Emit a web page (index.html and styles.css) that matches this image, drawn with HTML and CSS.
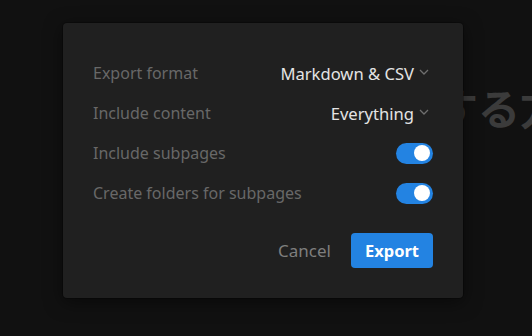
FILE: index.html
```html
<!DOCTYPE html>
<html lang="ja">
<head>
    <meta charset="UTF-8">
    <meta name="viewport" content="width=device-width, initial-scale=1.0">
    <title>Export</title>
    <link rel="stylesheet" href="styles.css">
</head>
<body>

    <div class="page">
        <h1 class="page-title">する方法</h1>
    </div>

    <div class="overlay">
        <div class="dialog">
            <div class="row">
                <span class="label">Export format</span>
                <span class="select">Markdown &amp; CSV
                    <svg class="chevron" width="10" height="6" viewBox="0 0 10 6"><path d="M1 1l4 4 4-4" fill="none" stroke="currentColor" stroke-width="1.3"/></svg>
                </span>
            </div>
            <div class="row">
                <span class="label">Include content</span>
                <span class="select">Everything
                    <svg class="chevron" width="10" height="6" viewBox="0 0 10 6"><path d="M1 1l4 4 4-4" fill="none" stroke="currentColor" stroke-width="1.3"/></svg>
                </span>
            </div>
            <div class="row">
                <span class="label">Include subpages</span>
                <span class="toggle on"><span class="knob"></span></span>
            </div>
            <div class="row">
                <span class="label">Create folders for subpages</span>
                <span class="toggle on"><span class="knob"></span></span>
            </div>

            <div class="actions">
                <button class="btn-cancel">Cancel</button>
                <button class="btn-export">Export</button>
            </div>
        </div>
    </div>

</body>
</html>
```

FILE: styles.css
```css
body {
    margin: 0;
    width: 532px;
    height: 336px;
    overflow: hidden;
    background-color: #111111;
    font-family: "Noto Sans", "Open Sans", sans-serif;
}
.page {
    padding: 86px 0 0 436px;
}
.page-title {
    margin: 0;
    font-family: "Noto Sans CJK JP", sans-serif;
    font-size: 42px;
    line-height: 1;
    font-weight: 700;
    color: #3b3b3b;
    white-space: nowrap;
}
.overlay {
    position: absolute;
    top: 0;
    left: 0;
    right: 0;
    bottom: 0;
}
.dialog {
    position: absolute;
    top: 23px;
    left: 63px;
    width: 340px;
    padding: 30px 30px 30px 30px;
    background-color: #202020;
    border-radius: 4px;
    box-shadow: 0 0 0 1px rgba(0, 0, 0, 0.25), 0 4px 18px rgba(0, 0, 0, 0.5);
}
.row {
    display: flex;
    align-items: center;
    justify-content: space-between;
    height: 40px;
}
.label {
    font-size: 16px;
    color: #686868;
}
.select {
    display: flex;
    align-items: center;
    gap: 5px;
    font-size: 16.6px;
    color: #e4e4e4;
}
.chevron {
    color: #6f6f6f;
    margin-top: -3px;
    margin-right: 4px;
}
.toggle {
    display: flex;
    align-items: center;
    width: 37px;
    height: 21px;
    border-radius: 11px;
    background-color: #2383e2;
    padding: 0 3px;
    box-sizing: border-box;
}
.toggle.on {
    justify-content: flex-end;
}
.knob {
    width: 16px;
    height: 16px;
    border-radius: 50%;
    background-color: #ffffff;
}
.actions {
    display: flex;
    justify-content: flex-end;
    align-items: center;
    gap: 20px;
    margin-top: 20px;
}
button {
    font-family: inherit;
    border: none;
    cursor: pointer;
}
.btn-cancel {
    padding: 0;
    background: none;
    color: #7e7e7e;
    font-size: 17px;
}
.btn-export {
    width: 82px;
    height: 35px;
    border-radius: 4px;
    background-color: #2383e2;
    color: #ffffff;
    font-size: 16.5px;
    font-weight: 700;
}
```
